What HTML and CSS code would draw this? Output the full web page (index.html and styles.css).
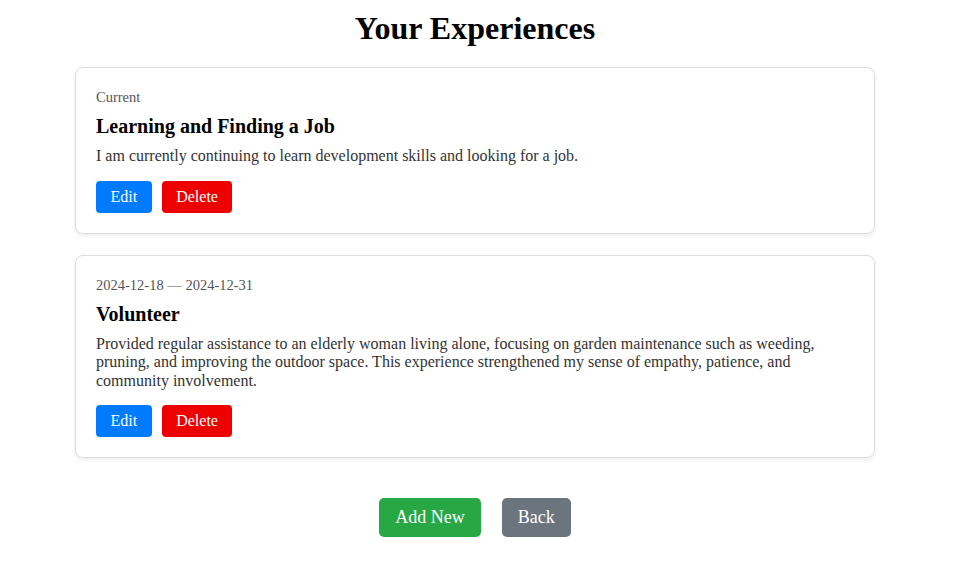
FILE: index.html
```html
<!DOCTYPE html>
<html lang="en">
<head>
<meta charset="utf-8">
<title>Your Experiences</title>
<link rel="stylesheet" href="styles.css">
</head>
<body>
<main class="page">
  <h1 class="title">Your Experiences</h1>
  <section class="card">
    <div class="dates">Current</div>
    <h3 class="card-title">Learning and Finding a Job</h3>
    <p class="desc">I am currently continuing to learn development skills and looking for a job.</p>
    <div class="actions">
      <button class="btn btn-edit">Edit</button>
      <button class="btn btn-delete">Delete</button>
    </div>
  </section>
  <section class="card">
    <div class="dates">2024-12-18 — 2024-12-31</div>
    <h3 class="card-title">Volunteer</h3>
    <p class="desc">Provided regular assistance to an elderly woman living alone, focusing on garden maintenance such as weeding, pruning, and improving the outdoor space. This experience strengthened my sense of empathy, patience, and community involvement.</p>
    <div class="actions">
      <button class="btn btn-edit">Edit</button>
      <button class="btn btn-delete">Delete</button>
    </div>
  </section>
  <div class="footer">
    <button class="big-btn btn-add">Add New</button>
    <button class="big-btn btn-back">Back</button>
  </div>
</main>
</body>
</html>
```

FILE: styles.css
```css
* { box-sizing: border-box; }
body {
  margin: 0;
  background: #fff;
  font-family: "Liberation Serif", "Times New Roman", serif;
  color: #222;
}
.page {
  width: 950px;
  padding-top: 10px;
  display: flex;
  flex-direction: column;
  align-items: center;
}
.title {
  margin: 0 0 20px;
  font-size: 32px;
  font-weight: bold;
  color: #000;
  line-height: 37px;
}
.card {
  width: 800px;
  border: 1px solid #ddd;
  border-radius: 8px;
  box-shadow: 0 2px 4px rgba(0,0,0,0.08);
  padding: 21px 20px 20px;
  margin-bottom: 21px;
}
.dates {
  font-size: 14.5px;
  color: #555;
  line-height: 16px;
}
.card-title {
  margin: 10px 0 9px;
  font-size: 20px;
  color: #000;
  line-height: 23px;
}
.desc {
  margin: 0 0 15px;
  font-size: 16px;
  line-height: 18.5px;
  color: #333;
}
.actions {
  display: flex;
  gap: 10px;
}
.btn {
  font-family: inherit;
  font-size: 16px;
  color: #fff;
  border: none;
  border-radius: 4px;
  padding: 7px 14.5px;
  line-height: 18px;
}
.btn-edit { background: #007bff; }
.btn-delete { background: #ee0000; }
.footer {
  display: flex;
  gap: 21px;
  margin-top: 19px;
}
.big-btn {
  font-family: inherit;
  font-size: 18px;
  color: #fff;
  border: none;
  border-radius: 5px;
  padding: 9px 16px;
  line-height: 21px;
}
.btn-add { background: #28a745; }
.btn-back { background: #6c757d; }
```
